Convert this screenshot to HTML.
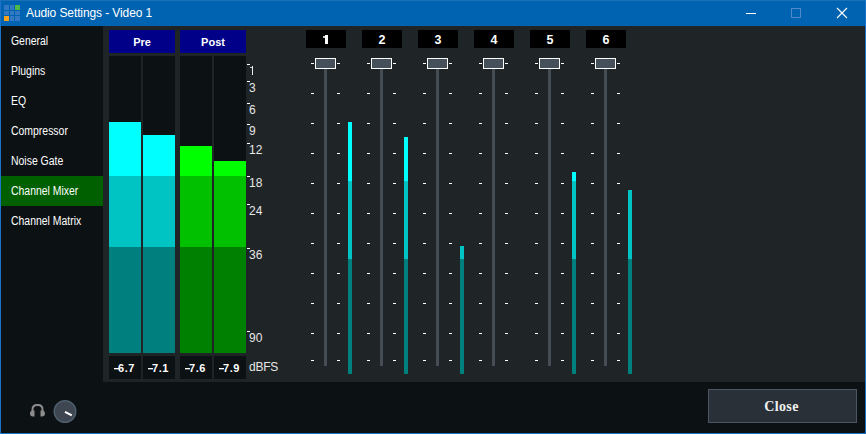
<!DOCTYPE html>
<html><head><meta charset="utf-8"><title>Audio Settings - Video 1</title>
<style>
*{margin:0;padding:0;box-sizing:border-box}
html,body{width:866px;height:434px;overflow:hidden;background:#0c1114}
body{position:relative;font-family:"Liberation Sans",sans-serif;color:#fff}
.ab{position:absolute}
.side{font-size:12px;white-space:nowrap;transform-origin:0 0}
.lbl{font-size:12px;line-height:12px;color:#e6e6e6;white-space:nowrap}
.vb{background:#0c1114;font-weight:bold;font-size:11px;letter-spacing:0.6px;text-align:left;line-height:25px}
.ch{background:#000;font-weight:bold;font-size:12.5px;text-align:center;line-height:20px}
.tk{background:#fff;height:1px;width:3px}
</style></head><body>

<div class="ab" style="left:0;top:0;width:866px;height:434px;border:1px solid #1a73c8"></div>
<div class="ab" style="left:0;top:0;width:866px;height:26px;background:#0063b1;border-top:1px solid #1c70b6;border-left:1px solid #1a73c8;border-right:1px solid #1a73c8"></div>
<div class="ab" style="left:4px;top:5px;width:5px;height:5px;background:#3278c2"></div>
<div class="ab" style="left:10px;top:5px;width:4px;height:5px;background:#3278c2"></div>
<div class="ab" style="left:15px;top:5px;width:5px;height:5px;background:#4cb848"></div>
<div class="ab" style="left:4px;top:11px;width:5px;height:4px;background:#3278c2"></div>
<div class="ab" style="left:10px;top:11px;width:4px;height:4px;background:#3278c2"></div>
<div class="ab" style="left:15px;top:11px;width:5px;height:4px;background:#3278c2"></div>
<div class="ab" style="left:4px;top:16px;width:5px;height:5px;background:#f7a21b"></div>
<div class="ab" style="left:10px;top:16px;width:4px;height:5px;background:#3278c2"></div>
<div class="ab" style="left:15px;top:16px;width:5px;height:5px;background:#3278c2"></div>
<div class="ab" style="left:26px;top:4px;font-size:12px;letter-spacing:-0.1px;line-height:18px;color:#fff;white-space:nowrap">Audio Settings - Video 1</div>
<div class="ab" style="left:746px;top:13px;width:10px;height:1px;background:#fff"></div>
<div class="ab" style="left:791px;top:8px;width:10px;height:10px;border:1px solid #4f89cc"></div>
<svg class="ab" style="left:836px;top:7px" width="12" height="12" viewBox="0 0 12 12"><path d="M1 1L11 11M11 1L1 11" stroke="#fff" stroke-width="1.1"/></svg>
<div class="ab" style="left:103px;top:26px;width:762px;height:356px;background:#1f2427"></div>
<div class="ab side" style="left:11px;top:34px;line-height:14px;transform:scaleX(0.87)">General</div>
<div class="ab side" style="left:11px;top:64px;line-height:14px;transform:scaleX(0.87)">Plugins</div>
<div class="ab side" style="left:11px;top:94px;line-height:14px;transform:scaleX(0.87)">EQ</div>
<div class="ab side" style="left:11px;top:124px;line-height:14px;transform:scaleX(0.87)">Compressor</div>
<div class="ab side" style="left:11px;top:154px;line-height:14px;transform:scaleX(0.87)">Noise Gate</div>
<div class="ab" style="left:1px;top:176px;width:102px;height:30px;background:#006000"></div>
<div class="ab side" style="left:11px;top:184px;line-height:14px;transform:scaleX(0.87)">Channel Mixer</div>
<div class="ab side" style="left:11px;top:214px;line-height:14px;transform:scaleX(0.87)">Channel Matrix</div>
<div class="ab" style="left:109px;top:30px;width:66px;height:23px;background:#000088;font-weight:bold;font-size:11px;text-align:center;line-height:25px">Pre</div>
<div class="ab" style="left:180px;top:30px;width:66px;height:23px;background:#000088;font-weight:bold;font-size:11px;text-align:center;line-height:25px">Post</div>
<div class="ab" style="left:109px;top:56px;width:32px;height:297px;background:#0c1114"></div>
<div class="ab" style="left:109px;top:122px;width:32px;height:54px;background:#00ffff"></div>
<div class="ab" style="left:109px;top:176px;width:32px;height:71px;background:#00c4c4"></div>
<div class="ab" style="left:109px;top:247px;width:32px;height:106px;background:#007f7f"></div>
<div class="ab" style="left:143px;top:56px;width:32px;height:297px;background:#0c1114"></div>
<div class="ab" style="left:143px;top:135px;width:32px;height:41px;background:#00ffff"></div>
<div class="ab" style="left:143px;top:176px;width:32px;height:71px;background:#00c4c4"></div>
<div class="ab" style="left:143px;top:247px;width:32px;height:106px;background:#007f7f"></div>
<div class="ab" style="left:180px;top:56px;width:32px;height:297px;background:#0c1114"></div>
<div class="ab" style="left:180px;top:146px;width:32px;height:30px;background:#00ff00"></div>
<div class="ab" style="left:180px;top:176px;width:32px;height:71px;background:#00c000"></div>
<div class="ab" style="left:180px;top:247px;width:32px;height:106px;background:#008000"></div>
<div class="ab" style="left:214px;top:56px;width:32px;height:297px;background:#0c1114"></div>
<div class="ab" style="left:214px;top:161px;width:32px;height:15px;background:#00ff00"></div>
<div class="ab" style="left:214px;top:176px;width:32px;height:71px;background:#00c000"></div>
<div class="ab" style="left:214px;top:247px;width:32px;height:106px;background:#008000"></div>
<div class="ab vb" style="left:109px;top:356px;width:32px;height:23px;padding-left:9px"><i style="position:absolute;left:5px;top:12px;width:5px;height:1px;background:#fff;box-shadow:0 1px 0 rgba(255,255,255,.35)"></i>6.7</div>
<div class="ab vb" style="left:143px;top:356px;width:32px;height:23px;padding-left:9px"><i style="position:absolute;left:5px;top:12px;width:5px;height:1px;background:#fff;box-shadow:0 1px 0 rgba(255,255,255,.35)"></i>7.1</div>
<div class="ab vb" style="left:180px;top:356px;width:32px;height:23px;padding-left:9px"><i style="position:absolute;left:5px;top:12px;width:5px;height:1px;background:#fff;box-shadow:0 1px 0 rgba(255,255,255,.35)"></i>7.6</div>
<div class="ab vb" style="left:214px;top:356px;width:32px;height:23px;padding-left:9px"><i style="position:absolute;left:5px;top:12px;width:5px;height:1px;background:#fff;box-shadow:0 1px 0 rgba(255,255,255,.35)"></i>7.9</div>
<div class="ab tk" style="left:247px;top:64px"></div>
<div class="ab" style="left:252px;top:66px;width:1px;height:9px;background:#ececec"></div>
<div class="ab" style="left:250px;top:67px;width:2px;height:1px;background:#cfcfcf"></div>
<div class="ab tk" style="left:247px;top:81px"></div>
<div class="ab lbl" style="left:249px;top:82px">3</div>
<div class="ab tk" style="left:247px;top:103px"></div>
<div class="ab lbl" style="left:249px;top:104px">6</div>
<div class="ab tk" style="left:247px;top:124px"></div>
<div class="ab lbl" style="left:249px;top:125px">9</div>
<div class="ab tk" style="left:247px;top:143px"></div>
<div class="ab lbl" style="left:249px;top:144px">12</div>
<div class="ab tk" style="left:247px;top:176px"></div>
<div class="ab lbl" style="left:249px;top:177px">18</div>
<div class="ab tk" style="left:247px;top:204px"></div>
<div class="ab lbl" style="left:249px;top:205px">24</div>
<div class="ab tk" style="left:247px;top:248px"></div>
<div class="ab lbl" style="left:249px;top:249px">36</div>
<div class="ab tk" style="left:247px;top:331px"></div>
<div class="ab lbl" style="left:249px;top:332px">90</div>
<div class="ab lbl" style="left:249px;top:361px;letter-spacing:-0.25px">dBFS</div>
<div class="ab ch" style="left:306px;top:30px;width:40px;height:18px"><i style="position:absolute;left:19px;top:5px;width:2.6px;height:9px;background:#fff"></i><i style="position:absolute;left:17px;top:6px;width:2px;height:1.5px;background:#fff;opacity:.8"></i></div>
<div class="ab" style="left:324px;top:66px;width:3px;height:300px;background:#444c56"></div>
<div class="ab tk" style="left:311px;top:63px"></div>
<div class="ab tk" style="left:337px;top:63px"></div>
<div class="ab tk" style="left:311px;top:93px"></div>
<div class="ab tk" style="left:337px;top:93px"></div>
<div class="ab tk" style="left:311px;top:123px"></div>
<div class="ab tk" style="left:337px;top:123px"></div>
<div class="ab tk" style="left:311px;top:153px"></div>
<div class="ab tk" style="left:337px;top:153px"></div>
<div class="ab tk" style="left:311px;top:183px"></div>
<div class="ab tk" style="left:337px;top:183px"></div>
<div class="ab tk" style="left:311px;top:213px"></div>
<div class="ab tk" style="left:337px;top:213px"></div>
<div class="ab tk" style="left:311px;top:243px"></div>
<div class="ab tk" style="left:337px;top:243px"></div>
<div class="ab tk" style="left:311px;top:273px"></div>
<div class="ab tk" style="left:337px;top:273px"></div>
<div class="ab tk" style="left:311px;top:303px"></div>
<div class="ab tk" style="left:337px;top:303px"></div>
<div class="ab tk" style="left:311px;top:333px"></div>
<div class="ab tk" style="left:337px;top:333px"></div>
<div class="ab tk" style="left:311px;top:360px"></div>
<div class="ab tk" style="left:337px;top:360px"></div>
<div class="ab" style="left:315px;top:58px;width:21px;height:11px;border:1px solid #fff;background:#46505a"></div>
<div class="ab" style="left:348px;top:122px;width:4px;height:59px;background:#00ffff"></div>
<div class="ab" style="left:348px;top:181px;width:4px;height:78px;background:#00c4c4"></div>
<div class="ab" style="left:348px;top:259px;width:4px;height:115px;background:#007f7f"></div>
<div class="ab ch" style="left:362px;top:30px;width:40px;height:18px">2</div>
<div class="ab" style="left:380px;top:66px;width:3px;height:300px;background:#444c56"></div>
<div class="ab tk" style="left:367px;top:63px"></div>
<div class="ab tk" style="left:393px;top:63px"></div>
<div class="ab tk" style="left:367px;top:93px"></div>
<div class="ab tk" style="left:393px;top:93px"></div>
<div class="ab tk" style="left:367px;top:123px"></div>
<div class="ab tk" style="left:393px;top:123px"></div>
<div class="ab tk" style="left:367px;top:153px"></div>
<div class="ab tk" style="left:393px;top:153px"></div>
<div class="ab tk" style="left:367px;top:183px"></div>
<div class="ab tk" style="left:393px;top:183px"></div>
<div class="ab tk" style="left:367px;top:213px"></div>
<div class="ab tk" style="left:393px;top:213px"></div>
<div class="ab tk" style="left:367px;top:243px"></div>
<div class="ab tk" style="left:393px;top:243px"></div>
<div class="ab tk" style="left:367px;top:273px"></div>
<div class="ab tk" style="left:393px;top:273px"></div>
<div class="ab tk" style="left:367px;top:303px"></div>
<div class="ab tk" style="left:393px;top:303px"></div>
<div class="ab tk" style="left:367px;top:333px"></div>
<div class="ab tk" style="left:393px;top:333px"></div>
<div class="ab tk" style="left:367px;top:360px"></div>
<div class="ab tk" style="left:393px;top:360px"></div>
<div class="ab" style="left:371px;top:58px;width:21px;height:11px;border:1px solid #fff;background:#46505a"></div>
<div class="ab" style="left:404px;top:137px;width:4px;height:44px;background:#00ffff"></div>
<div class="ab" style="left:404px;top:181px;width:4px;height:78px;background:#00c4c4"></div>
<div class="ab" style="left:404px;top:259px;width:4px;height:115px;background:#007f7f"></div>
<div class="ab ch" style="left:418px;top:30px;width:40px;height:18px">3</div>
<div class="ab" style="left:436px;top:66px;width:3px;height:300px;background:#444c56"></div>
<div class="ab tk" style="left:423px;top:63px"></div>
<div class="ab tk" style="left:449px;top:63px"></div>
<div class="ab tk" style="left:423px;top:93px"></div>
<div class="ab tk" style="left:449px;top:93px"></div>
<div class="ab tk" style="left:423px;top:123px"></div>
<div class="ab tk" style="left:449px;top:123px"></div>
<div class="ab tk" style="left:423px;top:153px"></div>
<div class="ab tk" style="left:449px;top:153px"></div>
<div class="ab tk" style="left:423px;top:183px"></div>
<div class="ab tk" style="left:449px;top:183px"></div>
<div class="ab tk" style="left:423px;top:213px"></div>
<div class="ab tk" style="left:449px;top:213px"></div>
<div class="ab tk" style="left:423px;top:243px"></div>
<div class="ab tk" style="left:449px;top:243px"></div>
<div class="ab tk" style="left:423px;top:273px"></div>
<div class="ab tk" style="left:449px;top:273px"></div>
<div class="ab tk" style="left:423px;top:303px"></div>
<div class="ab tk" style="left:449px;top:303px"></div>
<div class="ab tk" style="left:423px;top:333px"></div>
<div class="ab tk" style="left:449px;top:333px"></div>
<div class="ab tk" style="left:423px;top:360px"></div>
<div class="ab tk" style="left:449px;top:360px"></div>
<div class="ab" style="left:427px;top:58px;width:21px;height:11px;border:1px solid #fff;background:#46505a"></div>
<div class="ab" style="left:460px;top:246px;width:4px;height:13px;background:#00c4c4"></div>
<div class="ab" style="left:460px;top:259px;width:4px;height:115px;background:#007f7f"></div>
<div class="ab ch" style="left:474px;top:30px;width:40px;height:18px">4</div>
<div class="ab" style="left:492px;top:66px;width:3px;height:300px;background:#444c56"></div>
<div class="ab tk" style="left:479px;top:63px"></div>
<div class="ab tk" style="left:505px;top:63px"></div>
<div class="ab tk" style="left:479px;top:93px"></div>
<div class="ab tk" style="left:505px;top:93px"></div>
<div class="ab tk" style="left:479px;top:123px"></div>
<div class="ab tk" style="left:505px;top:123px"></div>
<div class="ab tk" style="left:479px;top:153px"></div>
<div class="ab tk" style="left:505px;top:153px"></div>
<div class="ab tk" style="left:479px;top:183px"></div>
<div class="ab tk" style="left:505px;top:183px"></div>
<div class="ab tk" style="left:479px;top:213px"></div>
<div class="ab tk" style="left:505px;top:213px"></div>
<div class="ab tk" style="left:479px;top:243px"></div>
<div class="ab tk" style="left:505px;top:243px"></div>
<div class="ab tk" style="left:479px;top:273px"></div>
<div class="ab tk" style="left:505px;top:273px"></div>
<div class="ab tk" style="left:479px;top:303px"></div>
<div class="ab tk" style="left:505px;top:303px"></div>
<div class="ab tk" style="left:479px;top:333px"></div>
<div class="ab tk" style="left:505px;top:333px"></div>
<div class="ab tk" style="left:479px;top:360px"></div>
<div class="ab tk" style="left:505px;top:360px"></div>
<div class="ab" style="left:483px;top:58px;width:21px;height:11px;border:1px solid #fff;background:#46505a"></div>
<div class="ab ch" style="left:530px;top:30px;width:40px;height:18px">5</div>
<div class="ab" style="left:548px;top:66px;width:3px;height:300px;background:#444c56"></div>
<div class="ab tk" style="left:535px;top:63px"></div>
<div class="ab tk" style="left:561px;top:63px"></div>
<div class="ab tk" style="left:535px;top:93px"></div>
<div class="ab tk" style="left:561px;top:93px"></div>
<div class="ab tk" style="left:535px;top:123px"></div>
<div class="ab tk" style="left:561px;top:123px"></div>
<div class="ab tk" style="left:535px;top:153px"></div>
<div class="ab tk" style="left:561px;top:153px"></div>
<div class="ab tk" style="left:535px;top:183px"></div>
<div class="ab tk" style="left:561px;top:183px"></div>
<div class="ab tk" style="left:535px;top:213px"></div>
<div class="ab tk" style="left:561px;top:213px"></div>
<div class="ab tk" style="left:535px;top:243px"></div>
<div class="ab tk" style="left:561px;top:243px"></div>
<div class="ab tk" style="left:535px;top:273px"></div>
<div class="ab tk" style="left:561px;top:273px"></div>
<div class="ab tk" style="left:535px;top:303px"></div>
<div class="ab tk" style="left:561px;top:303px"></div>
<div class="ab tk" style="left:535px;top:333px"></div>
<div class="ab tk" style="left:561px;top:333px"></div>
<div class="ab tk" style="left:535px;top:360px"></div>
<div class="ab tk" style="left:561px;top:360px"></div>
<div class="ab" style="left:539px;top:58px;width:21px;height:11px;border:1px solid #fff;background:#46505a"></div>
<div class="ab" style="left:572px;top:172px;width:4px;height:9px;background:#00ffff"></div>
<div class="ab" style="left:572px;top:181px;width:4px;height:78px;background:#00c4c4"></div>
<div class="ab" style="left:572px;top:259px;width:4px;height:115px;background:#007f7f"></div>
<div class="ab ch" style="left:586px;top:30px;width:40px;height:18px">6</div>
<div class="ab" style="left:604px;top:66px;width:3px;height:300px;background:#444c56"></div>
<div class="ab tk" style="left:591px;top:63px"></div>
<div class="ab tk" style="left:617px;top:63px"></div>
<div class="ab tk" style="left:591px;top:93px"></div>
<div class="ab tk" style="left:617px;top:93px"></div>
<div class="ab tk" style="left:591px;top:123px"></div>
<div class="ab tk" style="left:617px;top:123px"></div>
<div class="ab tk" style="left:591px;top:153px"></div>
<div class="ab tk" style="left:617px;top:153px"></div>
<div class="ab tk" style="left:591px;top:183px"></div>
<div class="ab tk" style="left:617px;top:183px"></div>
<div class="ab tk" style="left:591px;top:213px"></div>
<div class="ab tk" style="left:617px;top:213px"></div>
<div class="ab tk" style="left:591px;top:243px"></div>
<div class="ab tk" style="left:617px;top:243px"></div>
<div class="ab tk" style="left:591px;top:273px"></div>
<div class="ab tk" style="left:617px;top:273px"></div>
<div class="ab tk" style="left:591px;top:303px"></div>
<div class="ab tk" style="left:617px;top:303px"></div>
<div class="ab tk" style="left:591px;top:333px"></div>
<div class="ab tk" style="left:617px;top:333px"></div>
<div class="ab tk" style="left:591px;top:360px"></div>
<div class="ab tk" style="left:617px;top:360px"></div>
<div class="ab" style="left:595px;top:58px;width:21px;height:11px;border:1px solid #fff;background:#46505a"></div>
<div class="ab" style="left:628px;top:190px;width:4px;height:69px;background:#00c4c4"></div>
<div class="ab" style="left:628px;top:259px;width:4px;height:115px;background:#007f7f"></div>
<svg class="ab" style="left:30px;top:404px" width="15" height="13" viewBox="0 0 15 13">
<path d="M2.5 8 V5.5 Q2.5 1 7 1 H8 Q12.5 1 12.5 5.5 V8" fill="none" stroke="#8c8c8c" stroke-width="2"/>
<path d="M4.5 6.5 V12.5 H3 A3 3 0 0 1 0 9.5 A3 3 0 0 1 3 6.5 Z" fill="#8c8c8c"/>
<path d="M10.5 6.5 V12.5 H12 A3 3 0 0 0 15 9.5 A3 3 0 0 0 12 6.5 Z" fill="#8c8c8c"/>
</svg>
<svg class="ab" style="left:53px;top:399px" width="25" height="25" viewBox="0 0 25 25">
<circle cx="12" cy="12.5" r="10.8" fill="#3e4751" stroke="#4f5f6e" stroke-width="1.4"/>
<line x1="12" y1="12.8" x2="18.8" y2="16.4" stroke="#fff" stroke-width="2"/>
</svg>
<div class="ab" style="left:708px;top:389px;width:149px;height:34px;background:#2a3038;border:1px solid #4b5563;font-family:'Liberation Serif',serif;font-weight:bold;font-size:14px;letter-spacing:0.4px;text-align:center;line-height:33px;padding-right:2px;color:#f0f0f0">Close</div>
</body></html>
